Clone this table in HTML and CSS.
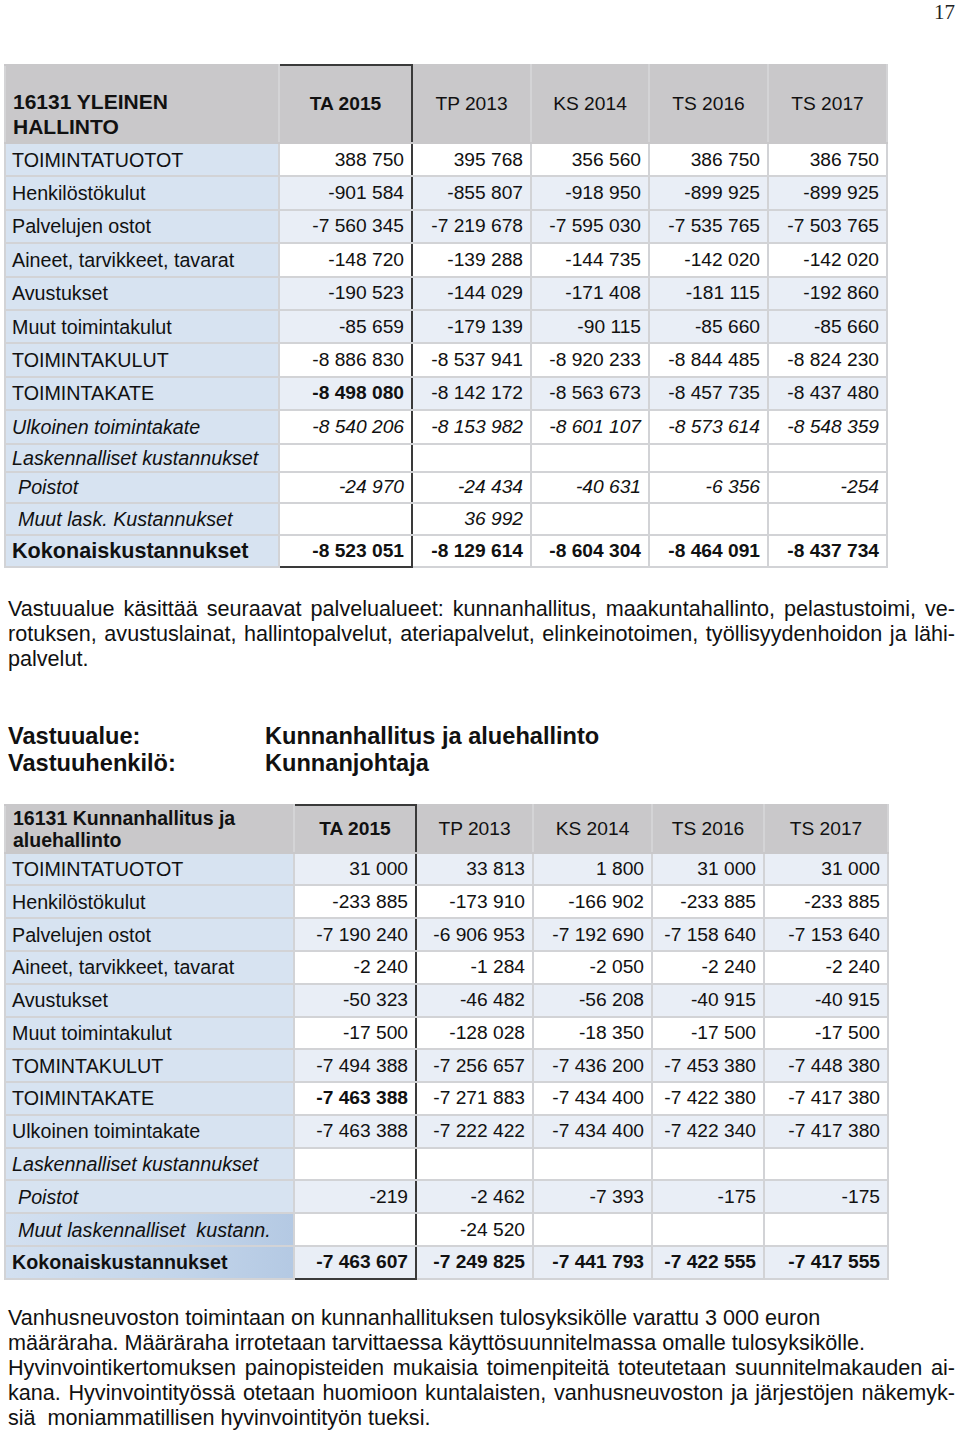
FILE: index.html
```html
<!DOCTYPE html>
<html lang="fi">
<head>
<meta charset="utf-8">
<title>17</title>
<link rel="stylesheet" href="styles.css">
</head>
<body>
<div class="pagenum">17</div>

<table class="tbl t1">
  <colgroup>
    <col class="c-lab"><col class="c-ta"><col class="c-a"><col class="c-b"><col class="c-c"><col class="c-d">
  </colgroup>
  <thead>
    <tr class="head">
      <th class="lab hlab">16131 YLEINEN<br>HALLINTO</th>
      <th class="ta">TA 2015</th>
      <th>TP 2013</th>
      <th>KS 2014</th>
      <th>TS 2016</th>
      <th>TS 2017</th>
    </tr>
  </thead>
  <tbody>
    <tr><td class="lab">TOIMINTATUOTOT</td><td class="ta">388 750</td><td>395 768</td><td>356 560</td><td>386 750</td><td>386 750</td></tr>
    <tr class="alt"><td class="lab">Henkilöstökulut</td><td class="ta">-901 584</td><td>-855 807</td><td>-918 950</td><td>-899 925</td><td>-899 925</td></tr>
    <tr class="alt"><td class="lab">Palvelujen ostot</td><td class="ta">-7 560 345</td><td>-7 219 678</td><td>-7 595 030</td><td>-7 535 765</td><td>-7 503 765</td></tr>
    <tr><td class="lab">Aineet, tarvikkeet, tavarat</td><td class="ta">-148 720</td><td>-139 288</td><td>-144 735</td><td>-142 020</td><td>-142 020</td></tr>
    <tr class="alt"><td class="lab">Avustukset</td><td class="ta">-190 523</td><td>-144 029</td><td>-171 408</td><td>-181 115</td><td>-192 860</td></tr>
    <tr class="alt"><td class="lab">Muut toimintakulut</td><td class="ta">-85 659</td><td>-179 139</td><td>-90 115</td><td>-85 660</td><td>-85 660</td></tr>
    <tr><td class="lab">TOIMINTAKULUT</td><td class="ta">-8 886 830</td><td>-8 537 941</td><td>-8 920 233</td><td>-8 844 485</td><td>-8 824 230</td></tr>
    <tr class="alt"><td class="lab">TOIMINTAKATE</td><td class="ta b">-8 498 080</td><td>-8 142 172</td><td>-8 563 673</td><td>-8 457 735</td><td>-8 437 480</td></tr>
    <tr class="it"><td class="lab">Ulkoinen toimintakate</td><td class="ta">-8 540 206</td><td>-8 153 982</td><td>-8 601 107</td><td>-8 573 614</td><td>-8 548 359</td></tr>
    <tr class="it r-lask"><td class="lab">Laskennalliset kustannukset</td><td class="ta"></td><td></td><td></td><td></td><td></td></tr>
    <tr class="it r-poi"><td class="lab sub">Poistot</td><td class="ta">-24 970</td><td>-24 434</td><td>-40 631</td><td>-6 356</td><td>-254</td></tr>
    <tr class="it r-muut"><td class="lab sub">Muut lask. Kustannukset</td><td class="ta"></td><td>36 992</td><td></td><td></td><td></td></tr>
    <tr class="tot r-tot"><td class="lab big">Kokonaiskustannukset</td><td class="ta">-8 523 051</td><td>-8 129 614</td><td>-8 604 304</td><td>-8 464 091</td><td>-8 437 734</td></tr>
  </tbody>
</table>

<div class="para p1">
  <span class="jl">Vastuualue käsittää seuraavat palvelualueet: kunnanhallitus, maakuntahallinto, pelastustoimi, ve-</span>
  <span class="jl">rotuksen, avustuslainat, hallintopalvelut, ateriapalvelut, elinkeinotoimen, työllisyydenhoidon ja lähi-</span>
  <span class="ll">palvelut.</span>
</div>

<div class="resp">
  <div class="resp-k">Vastuualue:</div><div class="resp-v">Kunnanhallitus ja aluehallinto</div>
  <div class="resp-k">Vastuuhenkilö:</div><div class="resp-v">Kunnanjohtaja</div>
</div>

<table class="tbl t2">
  <colgroup>
    <col class="c-lab"><col class="c-ta"><col class="c-a"><col class="c-b"><col class="c-c"><col class="c-d">
  </colgroup>
  <thead>
    <tr class="head">
      <th class="lab hlab">16131 Kunnanhallitus ja<br>aluehallinto</th>
      <th class="ta">TA 2015</th>
      <th>TP 2013</th>
      <th>KS 2014</th>
      <th>TS 2016</th>
      <th>TS 2017</th>
    </tr>
  </thead>
  <tbody>
    <tr class="alt"><td class="lab">TOIMINTATUOTOT</td><td class="ta">31 000</td><td>33 813</td><td>1 800</td><td>31 000</td><td>31 000</td></tr>
    <tr><td class="lab">Henkilöstökulut</td><td class="ta">-233 885</td><td>-173 910</td><td>-166 902</td><td>-233 885</td><td>-233 885</td></tr>
    <tr class="alt"><td class="lab">Palvelujen ostot</td><td class="ta">-7 190 240</td><td>-6 906 953</td><td>-7 192 690</td><td>-7 158 640</td><td>-7 153 640</td></tr>
    <tr><td class="lab">Aineet, tarvikkeet, tavarat</td><td class="ta">-2 240</td><td>-1 284</td><td>-2 050</td><td>-2 240</td><td>-2 240</td></tr>
    <tr class="alt"><td class="lab">Avustukset</td><td class="ta">-50 323</td><td>-46 482</td><td>-56 208</td><td>-40 915</td><td>-40 915</td></tr>
    <tr><td class="lab">Muut toimintakulut</td><td class="ta">-17 500</td><td>-128 028</td><td>-18 350</td><td>-17 500</td><td>-17 500</td></tr>
    <tr class="alt"><td class="lab">TOMINTAKULUT</td><td class="ta">-7 494 388</td><td>-7 256 657</td><td>-7 436 200</td><td>-7 453 380</td><td>-7 448 380</td></tr>
    <tr><td class="lab">TOIMINTAKATE</td><td class="ta b">-7 463 388</td><td>-7 271 883</td><td>-7 434 400</td><td>-7 422 380</td><td>-7 417 380</td></tr>
    <tr class="alt"><td class="lab">Ulkoinen toimintakate</td><td class="ta">-7 463 388</td><td>-7 222 422</td><td>-7 434 400</td><td>-7 422 340</td><td>-7 417 380</td></tr>
    <tr><td class="lab it">Laskennalliset kustannukset</td><td class="ta"></td><td></td><td></td><td></td><td></td></tr>
    <tr class="alt"><td class="lab it sub">Poistot</td><td class="ta">-219</td><td>-2 462</td><td>-7 393</td><td>-175</td><td>-175</td></tr>
    <tr><td class="lab it sub deep">Muut laskennalliset&nbsp; kustann.</td><td class="ta"></td><td>-24 520</td><td></td><td></td><td></td></tr>
    <tr class="alt tot"><td class="lab deep">Kokonaiskustannukset</td><td class="ta">-7 463 607</td><td>-7 249 825</td><td>-7 441 793</td><td>-7 422 555</td><td>-7 417 555</td></tr>
  </tbody>
</table>

<div class="para p2">
  <span class="ll">Vanhusneuvoston toimintaan on kunnanhallituksen tulosyksikölle varattu 3 000 euron</span>
  <span class="ll">määräraha. Määräraha irrotetaan tarvittaessa käyttösuunnitelmassa omalle tulosyksikölle.</span>
  <span class="jl">Hyvinvointikertomuksen painopisteiden mukaisia toimenpiteitä toteutetaan suunnitelmakauden ai-</span>
  <span class="jl">kana. Hyvinvointityössä otetaan huomioon kuntalaisten, vanhusneuvoston ja järjestöjen näkemyk-</span>
  <span class="ll">siä&nbsp; moniammatillisen hyvinvointityön tueksi.</span>
</div>
</body>
</html>
```

FILE: styles.css
```css
html, body {
  margin: 0;
  padding: 0;
  background: #ffffff;
}

body {
  width: 960px;
  font-family: "Liberation Sans", Arial, sans-serif;
  color: #111111;
  font-size: 19px;
}

.pagenum {
  font-family: "Liberation Serif", "Times New Roman", serif;
  font-size: 21px;
  line-height: 24px;
  text-align: right;
  padding-right: 5px;
  color: #222;
}

/* ---------- tables ---------- */
.tbl {
  border-collapse: collapse;
  table-layout: fixed;
  margin-left: 4px;
}

.tbl th,
.tbl td {
  border: 2px solid #d2d3d6;
  padding: 0 7px 0 7px;
  white-space: nowrap;
  overflow: hidden;
  font-size: 19.2px;
  line-height: 22px;
}

.tbl td {
  text-align: right;
  background: #ffffff;
}

.tbl tr.alt td {
  background: #e9eef6;
}

.tbl td.lab,
.tbl tr.alt td.lab {
  text-align: left;
  background: #d7e3f1;
  font-size: 19.7px;
  padding-left: 6px;
}

.tbl th {
  background: #c9c8ca;
  font-weight: normal;
  text-align: center;
  border-color: #c9c8ca #d4d4d6;
}

.tbl th.ta {
  font-weight: bold;
}

.tbl th.hlab {
  text-align: left;
  font-weight: bold;
  padding-left: 7px;
}

.tbl .ta {
  border-left: 2px solid #3a3a3a;
  border-right: 2px solid #3a3a3a;
}

.tbl th.ta {
  border-top: 2px solid #3a3a3a;
}

.tbl td.b,
.tbl tr.tot td {
  font-weight: bold;
}

.tbl tr.tot td.ta {
  border-bottom: 2px solid #3a3a3a;
}

.tbl tr.it td,
.tbl td.it {
  font-style: italic;
}

.tbl td.sub,
.tbl tr.alt td.sub {
  padding-left: 12px;
}

/* table 1 */
.t1 {
  width: 882px;
  margin-top: 40px;
}
.t1 .c-lab { width: 274px; }
.t1 .c-ta { width: 133px; }
.t1 .c-a { width: 119px; }
.t1 .c-b { width: 118px; }
.t1 .c-c { width: 119px; }
.t1 .c-d { width: 119px; }

.t1 tr.head { height: 78px; }
.t1 th.hlab {
  vertical-align: bottom;
  font-size: 21px;
  line-height: 25px;
  padding-bottom: 3px;
}
.t1 tbody tr { height: 33.4px; }
.t1 tbody tr.r-lask { height: 28px; }
.t1 tbody tr.r-poi { height: 31px; }
.t1 tbody tr.r-muut { height: 32px; }
.t1 tbody tr.r-tot { height: 32px; }
.t1 td.big {
  font-size: 21.6px;
}

/* table 2 */
.t2 {
  width: 883px;
  margin-top: 27px;
}
.t2 .c-lab { width: 289px; }
.t2 .c-ta { width: 122px; }
.t2 .c-a { width: 117px; }
.t2 .c-b { width: 119px; }
.t2 .c-c { width: 112px; }
.t2 .c-d { width: 124px; }

.t2 tr.head { height: 48px; }
.t2 th.hlab {
  font-size: 19.5px;
  line-height: 22px;
  vertical-align: middle;
}
.t2 tbody tr { height: 32.8px; }

.t2 td.deep,
.t2 tr.alt td.deep {
  background: linear-gradient(to right, #d3e0f0 0%, #c3d5ea 60%, #b4c9e3 100%);
}

/* ---------- paragraphs ---------- */
.para {
  padding: 0 5px 0 8px;
  font-size: 21.6px;
  line-height: 25px;
  color: #111;
}

.para .jl {
  display: block;
  text-align: justify;
  text-align-last: justify;
}

.para .ll {
  display: block;
  text-align: left;
}

.p1 {
  margin-top: 28px;
}

.p2 {
  margin-top: 25px;
}

.resp {
  margin-top: 52px;
  padding-left: 8px;
  display: grid;
  grid-template-columns: 257px auto;
  font-weight: bold;
  font-size: 23.6px;
  line-height: 27px;
}
```
